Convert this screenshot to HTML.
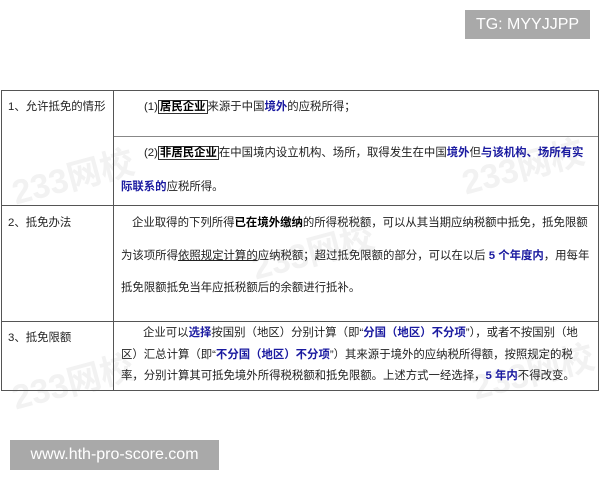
<!DOCTYPE html>
<html><head><meta charset="utf-8"><style>
body{margin:0;width:600px;height:480px;background:#fff;position:relative;overflow:hidden;font-family:"Liberation Sans","Noto Sans CJK SC",sans-serif;color:#222}
.t{position:absolute;font-size:11.4px;white-space:nowrap;line-height:14px}
.b{color:#1a1aa0;font-weight:bold}
.k{font-weight:bold;color:#000}
.box{border:1px solid #333;font-weight:bold;color:#000;padding:0 1px}
.h{position:absolute;background:#555}
.badge{position:absolute;background:#a9a9a9;color:#fff;font-family:"Liberation Sans",sans-serif}
.wm{position:absolute;color:#f2f2f2;font-size:34px;font-weight:bold;transform:rotate(-15deg);white-space:nowrap}
</style></head><body>
<div class="wm" style="left:10px;top:150px">233网校</div>
<div class="wm" style="left:460px;top:140px">233网校</div>
<div class="wm" style="left:250px;top:225px">233网校</div>
<div class="wm" style="left:10px;top:355px">233网校</div>
<div class="wm" style="left:470px;top:345px">233网校</div>
<div class="badge" style="left:465px;top:10px;width:125px;height:29px;font-size:16px;line-height:29px;text-align:center">TG: MYYJJPP</div>
<div class="badge" style="left:10px;top:440px;width:209px;height:30px;font-size:16px;line-height:30px;text-align:center">www.hth-pro-score.com</div>

<div class="h" style="left:1px;top:90px;width:598px;height:1px"></div>
<div class="h" style="left:113px;top:136px;width:486px;height:1px;background:#888"></div>
<div class="h" style="left:1px;top:205px;width:598px;height:1px"></div>
<div class="h" style="left:1px;top:321px;width:598px;height:1px"></div>
<div class="h" style="left:1px;top:390px;width:598px;height:1px"></div>
<div class="h" style="left:1px;top:90px;width:1px;height:301px"></div>
<div class="h" style="left:113px;top:90px;width:1px;height:301px"></div>
<div class="h" style="left:598px;top:90px;width:1px;height:301px"></div>

<div class="t" style="left:8px;top:100px">1、允许抵免的情形</div>
<div class="t" style="left:144px;top:100px">(1)<span class="box">居民企业</span>来源于中国<span class="b">境外</span>的应税所得；</div>
<div class="t" style="left:144px;top:146px">(2)<span class="box">非居民企业</span>在中国境内设立机构、场所，取得发生在中国<span class="b">境外</span>但<span class="b">与该机构、场所有实</span></div>
<div class="t" style="left:121px;top:180px"><span class="b">际联系的</span>应税所得。</div>

<div class="t" style="left:8px;top:216px">2、抵免办法</div>
<div class="t" style="left:132px;top:216px">企业取得的下列所得<span class="k">已在境外缴纳</span>的所得税税额，可以从其当期应纳税额中抵免，抵免限额</div>
<div class="t" style="left:121px;top:249px">为该项所得<u>依照规定计算的</u>应纳税额；超过抵免限额的部分，可以在以后 <span class="b">5 个年度内</span>，用每年</div>
<div class="t" style="left:121px;top:281px">抵免限额抵免当年应抵税额后的余额进行抵补。</div>

<div class="t" style="left:8px;top:331px">3、抵免限额</div>
<div class="t" style="left:143px;top:326px">企业可以<span class="b">选择</span>按国别（地区）分别计算（即“<span class="b">分国（地区）不分项</span>”），或者不按国别（地</div>
<div class="t" style="left:121px;top:348px">区）汇总计算（即“<span class="b">不分国（地区）不分项</span>”）其来源于境外的应纳税所得额，按照规定的税</div>
<div class="t" style="left:121px;top:369px">率，分别计算其可抵免境外所得税税额和抵免限额。上述方式一经选择，<span class="b">5 年内</span>不得改变。</div>
</body></html>
